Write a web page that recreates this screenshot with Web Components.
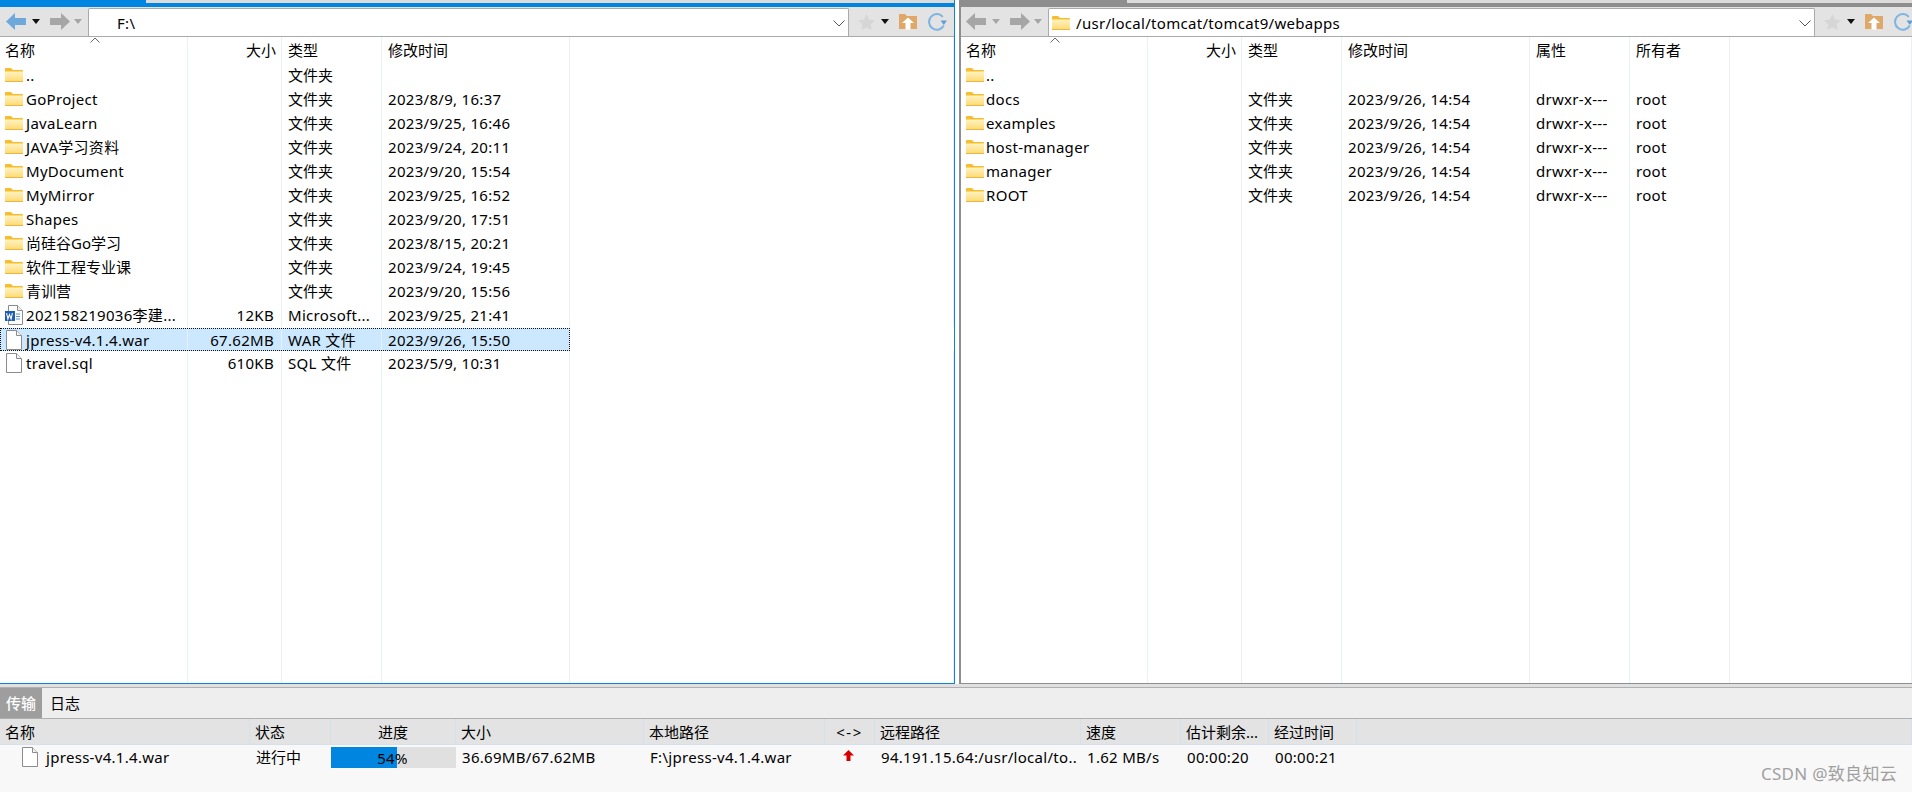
<!DOCTYPE html>
<html lang="zh"><head><meta charset="utf-8"><title>FTP</title>
<style>
html,body{margin:0;padding:0;background:#fff;overflow:hidden}
body{width:1912px;height:792px;font:15px/20px "Noto Sans","Noto Sans CJK SC",sans-serif;color:#000}
</style></head>
<body>
<x-app>
  <x-pane slot="left" active style="--cols:188px 94px 100px 188px 1fr;--sort:90px;--igap:3px">
    <x-toolbar active path="F:\" slot="bar"></x-toolbar>
    <x-row head><x-cell>名称</x-cell><x-cell size head>大小</x-cell><x-cell>类型</x-cell><x-cell>修改时间</x-cell><x-cell></x-cell></x-row>
    <x-row><x-cell name><x-icon type="folder"></x-icon>..</x-cell><x-cell size></x-cell><x-cell zh>文件夹</x-cell><x-cell></x-cell><x-cell></x-cell></x-row>
    <x-row><x-cell name><x-icon type="folder"></x-icon>GoProject</x-cell><x-cell size></x-cell><x-cell zh>文件夹</x-cell><x-cell>2023/8/9, 16:37</x-cell><x-cell></x-cell></x-row>
    <x-row><x-cell name><x-icon type="folder"></x-icon>JavaLearn</x-cell><x-cell size></x-cell><x-cell zh>文件夹</x-cell><x-cell>2023/9/25, 16:46</x-cell><x-cell></x-cell></x-row>
    <x-row><x-cell name><x-icon type="folder"></x-icon>JAVA学习资料</x-cell><x-cell size></x-cell><x-cell zh>文件夹</x-cell><x-cell>2023/9/24, 20:11</x-cell><x-cell></x-cell></x-row>
    <x-row><x-cell name><x-icon type="folder"></x-icon>MyDocument</x-cell><x-cell size></x-cell><x-cell zh>文件夹</x-cell><x-cell>2023/9/20, 15:54</x-cell><x-cell></x-cell></x-row>
    <x-row><x-cell name><x-icon type="folder"></x-icon>MyMirror</x-cell><x-cell size></x-cell><x-cell zh>文件夹</x-cell><x-cell>2023/9/25, 16:52</x-cell><x-cell></x-cell></x-row>
    <x-row><x-cell name><x-icon type="folder"></x-icon>Shapes</x-cell><x-cell size></x-cell><x-cell zh>文件夹</x-cell><x-cell>2023/9/20, 17:51</x-cell><x-cell></x-cell></x-row>
    <x-row><x-cell name zh><x-icon type="folder"></x-icon>尚硅谷Go学习</x-cell><x-cell size></x-cell><x-cell zh>文件夹</x-cell><x-cell>2023/8/15, 20:21</x-cell><x-cell></x-cell></x-row>
    <x-row><x-cell name zh><x-icon type="folder"></x-icon>软件工程专业课</x-cell><x-cell size></x-cell><x-cell zh>文件夹</x-cell><x-cell>2023/9/24, 19:45</x-cell><x-cell></x-cell></x-row>
    <x-row><x-cell name zh><x-icon type="folder"></x-icon>青训营</x-cell><x-cell size></x-cell><x-cell zh>文件夹</x-cell><x-cell>2023/9/20, 15:56</x-cell><x-cell></x-cell></x-row>
    <x-row><x-cell name><x-icon type="word"></x-icon>202158219036李建...</x-cell><x-cell size>12KB</x-cell><x-cell>Microsoft...</x-cell><x-cell>2023/9/25, 21:41</x-cell><x-cell></x-cell></x-row>
    <x-row selected><x-cell name><x-icon type="file"></x-icon>jpress-v4.1.4.war</x-cell><x-cell size>67.62MB</x-cell><x-cell>WAR 文件</x-cell><x-cell>2023/9/26, 15:50</x-cell></x-row>
    <x-row><x-cell name><x-icon type="file"></x-icon>travel.sql</x-cell><x-cell size>610KB</x-cell><x-cell>SQL 文件</x-cell><x-cell>2023/5/9, 10:31</x-cell><x-cell></x-cell></x-row>
    <x-row fill><x-cell></x-cell><x-cell></x-cell><x-cell></x-cell><x-cell></x-cell><x-cell></x-cell></x-row>
  </x-pane>
  <x-pane slot="right" style="--cols:187px 94px 100px 188px 100px 100px 1fr;--sort:89px;--igap:2px">
    <x-toolbar path="/usr/local/tomcat/tomcat9/webapps" folder slot="bar"></x-toolbar>
    <x-row head><x-cell>名称</x-cell><x-cell size head>大小</x-cell><x-cell>类型</x-cell><x-cell>修改时间</x-cell><x-cell>属性</x-cell><x-cell>所有者</x-cell><x-cell></x-cell></x-row>
    <x-row><x-cell name><x-icon type="folder"></x-icon>..</x-cell><x-cell size></x-cell><x-cell></x-cell><x-cell></x-cell><x-cell></x-cell><x-cell></x-cell><x-cell></x-cell></x-row>
    <x-row><x-cell name><x-icon type="folder"></x-icon>docs</x-cell><x-cell size></x-cell><x-cell zh>文件夹</x-cell><x-cell>2023/9/26, 14:54</x-cell><x-cell>drwxr-x---</x-cell><x-cell>root</x-cell><x-cell></x-cell></x-row>
    <x-row><x-cell name><x-icon type="folder"></x-icon>examples</x-cell><x-cell size></x-cell><x-cell zh>文件夹</x-cell><x-cell>2023/9/26, 14:54</x-cell><x-cell>drwxr-x---</x-cell><x-cell>root</x-cell><x-cell></x-cell></x-row>
    <x-row><x-cell name><x-icon type="folder"></x-icon>host-manager</x-cell><x-cell size></x-cell><x-cell zh>文件夹</x-cell><x-cell>2023/9/26, 14:54</x-cell><x-cell>drwxr-x---</x-cell><x-cell>root</x-cell><x-cell></x-cell></x-row>
    <x-row><x-cell name><x-icon type="folder"></x-icon>manager</x-cell><x-cell size></x-cell><x-cell zh>文件夹</x-cell><x-cell>2023/9/26, 14:54</x-cell><x-cell>drwxr-x---</x-cell><x-cell>root</x-cell><x-cell></x-cell></x-row>
    <x-row><x-cell name><x-icon type="folder"></x-icon>ROOT</x-cell><x-cell size></x-cell><x-cell zh>文件夹</x-cell><x-cell>2023/9/26, 14:54</x-cell><x-cell>drwxr-x---</x-cell><x-cell>root</x-cell><x-cell></x-cell></x-row>
    <x-row fill><x-cell></x-cell><x-cell></x-cell><x-cell></x-cell><x-cell></x-cell><x-cell></x-cell><x-cell></x-cell><x-cell></x-cell></x-row>
  </x-pane>
  <x-queue slot="queue">
    <x-tab active slot="tabs">传输</x-tab><x-tab slot="tabs">日志</x-tab>
    <x-qrow head><x-qcell zh>名称</x-qcell><x-qcell zh>状态</x-qcell><x-qcell center zh>进度</x-qcell><x-qcell zh>大小</x-qcell><x-qcell zh>本地路径</x-qcell><x-qcell center wide>&lt;-&gt;</x-qcell><x-qcell zh>远程路径</x-qcell><x-qcell zh>速度</x-qcell><x-qcell zh>估计剩余...</x-qcell><x-qcell zh>经过时间</x-qcell><x-qcell></x-qcell></x-qrow>
    <x-qrow><x-qcell indent><x-icon type="file"></x-icon>jpress-v4.1.4.war</x-qcell><x-qcell zh>进行中</x-qcell><x-progress value="54"></x-progress><x-qcell>36.69MB/67.62MB</x-qcell><x-qcell>F:\jpress-v4.1.4.war</x-qcell><x-qcell center><x-icon type="up"></x-icon></x-qcell><x-qcell>94.191.15.64:/usr/local/to..</x-qcell><x-qcell>1.62 MB/s</x-qcell><x-qcell>00:00:20</x-qcell><x-qcell>00:00:21</x-qcell><x-qcell></x-qcell></x-qrow>
    <x-mark slot="mark">CSDN @致良知云</x-mark>
  </x-queue>
</x-app>
<script>
const def=(name,css,html,extra={})=>{
  customElements.define(name,class extends HTMLElement{
    constructor(){super();const r=this.attachShadow({mode:'open'});r.innerHTML=`<style>${css}</style>${typeof html==='function'?html(this):html}`;}
    connectedCallback(){extra.connected&&extra.connected.call(this);}
  });
};
const ICONS={
 folder:`<svg width="18" height="14" viewBox="0 0 18 14"><defs><linearGradient id="g" x1="0" y1="0" x2="0" y2="1"><stop offset="0" stop-color="#fff3c4"/><stop offset="1" stop-color="#fed96f"/></linearGradient></defs><path d="M0 1a1 1 0 0 1 1-1h5l2 2h9a1 1 0 0 1 1 1v10a1 1 0 0 1-1 1H1a1 1 0 0 1-1-1z" fill="#f7bd2c"/><path d="M0 3.500h18V13a1 1 0 0 1-1 1H1a1 1 0 0 1-1-1z" fill="url(#g)"/><path d="M0 13.500h18" stroke="#efb53e"/></svg>`,
 file:`<svg width="16" height="20" viewBox="0 0 16 20"><path d="M.5.500h10l5 5v14H.5z" fill="#fff" stroke="#8c8c8c"/><path d="M10.500.500v5h5" fill="#f1f1f1" stroke="#8c8c8c"/></svg>`,
 word:`<svg width="18" height="20" viewBox="0 0 18 20"><path d="M3.500.500h9l5 5v14h-14z" fill="#fff" stroke="#8c8c8c"/><path d="M12.500.500v5h5" fill="#f1f1f1" stroke="#8c8c8c"/><path d="M11 9h4M11 11.500h4M11 14h4" stroke="#5d90d0"/><rect y="6" width="10" height="10" fill="#1f5db4"/><path d="M1.600 8l1.300 6 1.600-4.400L6.100 14l1.300-6" fill="none" stroke="#fff" stroke-width="1.100"/></svg>`,
 up:`<svg width="11" height="11" viewBox="0 0 11 11"><path d="M5.500 0L11 5.500H7.500V11h-4V5.500H0z" fill="#d40000"/></svg>`
};
def('x-icon',`:host{display:inline-flex;flex:none;align-items:center;justify-content:center;line-height:0}
 :host([type=up]){margin-right:4px;margin-top:-3px}`,h=>ICONS[h.getAttribute('type')]||'');
def('x-app',`:host{display:flex;flex-direction:column;width:1912px;height:792px;overflow:hidden}
 .top{display:flex;gap:4px;height:684px;flex:none}`,`<div class="top"><slot name="left"></slot><slot name="right"></slot></div><slot name="queue"></slot>`);
def('x-pane',`:host{display:flex;flex-direction:column;box-sizing:border-box;height:684px;position:relative;flex:1 1 0;min-width:0;border-left:2px solid #8e8e8e;border-bottom:1px solid #8e8e8e;letter-spacing:.3px}
 :host([active]){flex:0 0 955px;border-left:0;border-right:1px solid #0a84d8;border-bottom:1px solid #0a84d8}
 .strip{height:3px;flex:none;background:#dcdcdc;display:flex}
 .strip i{display:block;height:3px;width:166px;background:#8e8e8e}
 :host([active]) .strip i{width:146px;background:#0086e0}
 .rule{height:4px;flex:none;background:#8e8e8e}
 :host([active]) .rule{background:#0086e0}
 .list{flex:1;display:flex;flex-direction:column;position:relative;min-height:0}
 .sort{position:absolute;left:var(--sort);top:0;width:10px;height:6px}`,
 `<div class="strip"><i></i></div><div class="rule"></div><slot name="bar"></slot><div class="list"><svg class="sort" viewBox="0 0 10 6"><path d="M.5 5.500L5 1l4.500 4.500" fill="none" stroke="#666"/></svg><slot></slot></div>`);
const btn={
 arrowL:c=>`<svg width="20" height="17" viewBox="0 0 20 17"><path d="M0 8.500L9 0v5h11v7H9v5z" fill="${c}"/></svg>`,
 arrowR:c=>`<svg width="20" height="17" viewBox="0 0 20 17"><path d="M20 8.500L11 0v5H0v7h11v5z" fill="${c}"/></svg>`,
 caret:c=>`<svg width="8" height="5" viewBox="0 0 8 5"><path d="M0 0h8L4 5z" fill="${c}"/></svg>`,
 star:`<svg width="17" height="16" viewBox="0 0 17 16"><path d="M8.500 0l2.600 5.400 5.900.8-4.300 4.100 1 5.700-5.200-2.800L3.300 16l1-5.700L0 6.200l5.900-.8z" fill="#d6d6d6"/></svg>`,
 home:`<svg width="18" height="17" viewBox="0 0 18 17"><path d="M0 1h6l2 2h10v13H0z" fill="#dfa869"/><path d="M9 4.500L15 10h-3.500v6.500h-5V10H3z" fill="#fff"/></svg>`,
 refresh:`<svg width="19" height="18" viewBox="0 0 19 18"><path d="M14.800 3.800A7.800 7.800 0 1 0 15.800 12.500" fill="none" stroke="#7db4e3" stroke-width="2"/><path d="M12.500 7.500h6.500L15.800 12z" fill="#5d9fd8"/></svg>`
};
def('x-toolbar',`:host{display:flex;flex:none;align-items:flex-end;box-sizing:border-box;height:30px;background:#e3e3e3;border-bottom:1px solid #aaa}
 .nav{display:flex;align-items:center;align-self:stretch;flex:none;box-sizing:border-box;width:88px;padding-left:6px}
 :host(:not([active])) .nav{width:87px;padding-left:5px}
 .c1{margin:0 10px 0 6px;display:flex}.c2{margin:0 0 0 4px;display:flex}
 .box{flex:1;min-width:0;height:28px;box-sizing:border-box;background:#fff;border:1px solid #aaa;border-bottom:0;border-radius:2px 2px 0 0;display:flex;align-items:center;padding-left:28px;position:relative}
 :host([folder]) .box{padding-left:27px}
 .box svg.f{position:absolute;left:3px;top:7px}
 .chev{position:absolute;right:3px;top:11px}
 .tools{flex:none;display:flex;align-items:center;align-self:stretch;width:105px;position:relative}
 :host(:not([active])) .tools{width:97px}
 .tools>*{display:flex;flex:none}
 .s{margin-left:9px}.k{margin-left:6px}.h{margin-left:10px}.r{margin-left:11px}`,
 h=>{const a=h.hasAttribute('active');return `<div class="nav">${btn.arrowL(a?'#6fa9dc':'#a6a6a6')}<span class="c1">${btn.caret(a?'#111':'#a6a6a6')}</span>${btn.arrowR('#a6a6a6')}<span class="c2">${btn.caret('#a6a6a6')}</span></div>
 <div class="box">${h.hasAttribute('folder')?ICONS.folder.replace('<svg ','<svg class="f" ').replace(/id="g"/,'id="g2"').replace('#g)','#g2)'):''}<span></span><svg class="chev" width="12" height="7" viewBox="0 0 12 7"><path d="M.5.500L6 6l5.500-5.500" fill="none" stroke="#555"/></svg></div>
 <div class="tools"><span class="s">${btn.star}</span><span class="k">${btn.caret('#111')}</span><span class="h">${btn.home}</span><span class="r">${btn.refresh}</span></div>`},
 {connected(){this.shadowRoot.querySelector('.box span').textContent=this.getAttribute('path');}});
def('x-row',`:host{display:grid;grid-template-columns:var(--cols);height:24px;flex:none;position:relative;box-sizing:border-box}
 :host([head]){height:26px;letter-spacing:0}
 :host([selected]){height:23px;margin-top:1px;background:#cce8ff;outline:1px dotted #111;outline-offset:-1px;margin-right:calc(100% - 570px)}
 :host([fill]){flex:1;height:auto}`,`<slot></slot>`);
def('x-cell',`:host{display:flex;align-items:center;box-sizing:border-box;padding-left:6px;border-right:1px solid #e9f0f7;white-space:nowrap;overflow:hidden;min-width:0}
 :host(:first-child){padding-left:5px}
 :host([name]){padding-left:5px}
 :host([zh]){letter-spacing:0}
 :host([size]){justify-content:flex-end;padding-left:0;padding-right:7px}
 :host([size][head]){padding-right:5px}
 ::slotted(x-icon){margin-right:var(--igap);width:18px}`,`<slot></slot>`);
def('x-queue',`:host{display:block;flex:1;position:relative;background:#f8f8f8;letter-spacing:.3px}
 .a{height:3px;background:#e0e0e0;border-bottom:1px solid #b0b0b0}
 .tabs{height:30px;background:#eee;display:flex;border-bottom:1px solid #b0b0b0;letter-spacing:0}`,
 `<div class="a"></div><div class="tabs"><slot name="tabs"></slot></div><slot></slot><slot name="mark"></slot>`);
def('x-tab',`:host{display:flex;align-items:center;box-sizing:border-box;width:42px;padding-left:6px;height:30px}
 :host([active]){background:#9e9e9e;color:#fff;font-weight:500}
 :host(:not([active])){padding-left:8px;width:50px}`,`<slot></slot>`);
def('x-qrow',`:host{display:grid;grid-template-columns:250px 81px 125px 188px 181px 50px 206px 100px 88px 88px 1fr;height:47px}
 :host([head]){height:26px;background:#e3e3e3;border-bottom:1px solid #d5e0ee;box-sizing:border-box}`,`<slot></slot>`);
def('x-qcell',`:host{display:flex;align-items:center;box-sizing:border-box;padding-left:6px;white-space:nowrap;overflow:hidden;min-width:0;height:23px}
 :host-context(x-qrow[head]){padding-left:5px;height:25px;border-right:1px solid #d5e0ee}
 :host([zh]){letter-spacing:0}
 :host([wide]){letter-spacing:1.5px}
 :host([center]),:host-context(x-qrow[head]):host([center]){justify-content:center;padding-left:0}
 :host([indent]){padding-left:22px}
 ::slotted(x-icon[type=file]){margin-right:8px}`,`<slot></slot>`);
def('x-progress',`:host{display:block;position:relative;height:21px;margin-top:2px;background:#e0e0e0}
 .b{position:absolute;left:0;top:0;bottom:0;background:#0086e0}
 .t{position:absolute;inset:0;display:flex;align-items:center;justify-content:center;padding-right:2px}`,
 h=>`<div class="b" style="width:${h.getAttribute('value')*1.23}px"></div><div class="t">${h.getAttribute('value')}%</div>`);
def('x-mark',`:host{position:absolute;right:15px;bottom:9px;font-size:17px;line-height:18px;color:#a0a0a0;letter-spacing:.3px}`,`<slot></slot>`);
</script>
</body></html>
